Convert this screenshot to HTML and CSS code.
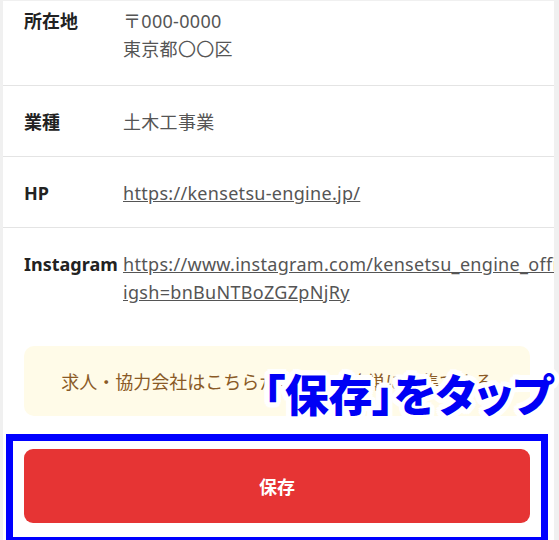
FILE: index.html
```html
<!DOCTYPE html>
<html lang="ja">
<head>
<meta charset="utf-8">
<title>会社情報</title>
<link rel="stylesheet" href="styles.css">
</head>
<body>
<div class="card">
  <div class="row first">
    <div class="label">所在地</div>
    <div class="value">〒000-0000<br>東京都〇〇区</div>
  </div>
  <div class="row">
    <div class="label">業種</div>
    <div class="value">土木工事業</div>
  </div>
  <div class="row">
    <div class="label">HP</div>
    <div class="value"><a class="link" href="#">https://kensetsu-engine.jp/</a></div>
  </div>
  <div class="row last">
    <div class="label">Instagram</div>
    <div class="value"><a class="link" href="#"><span class="nw">https://www.instagram.com/kensetsu_engine_official?</span><wbr><span class="nw">igsh=bnBuNTBoZGZpNjRy</span></a></div>
  </div>
  <div class="notice">求人・協力会社はこちらから無料で簡単に募集できる</div>
  <button class="save" type="button">保存</button>
</div>
<div class="highlight"></div>
<div class="callout">「保存」をタップ</div>
</body>
</html>
```
FILE: styles.css
```css
html, body {
  margin: 0;
  padding: 0;
}
body {
  background: #f0f0f0;
  padding: 1px 5px 0 3px;
  height: 539px;
  overflow: hidden;
  font-family: "Noto Sans", "Noto Sans CJK JP", sans-serif;
  font-size: 18px;
  color: #555;
}
.card {
  background: #fff;
  height: 600px;
  overflow: hidden;
}
.row {
  display: flex;
  padding: 22px 0 20px 21px;
  border-bottom: 1px solid #e4e4e4;
  line-height: 28px;
}
.row.first {
  padding-top: 6px;
  padding-bottom: 22px;
}
.row.last {
  border-bottom: none;
}
.label {
  flex: 0 0 99px;
  font-weight: 700;
  color: #222;
}
.value {
  flex: 1 1 auto;
  min-width: 0;
  color: #555;
  letter-spacing: 0.3px;
}
.link {
  color: #555;
  text-decoration: underline;
}
.nw {
  white-space: nowrap;
}
.notice {
  margin: 20px 24px 0 21px;
  height: 70px;
  border-radius: 10px;
  background: #fffbe8;
  color: #8a5a26;
  display: flex;
  align-items: center;
  justify-content: center;
  font-family: "Noto Sans CJK JP", sans-serif;
}
.save {
  display: block;
  margin: 33px 24px 0 21px;
  width: calc(100% - 45px);
  height: 74px;
  border: none;
  border-radius: 9px;
  background: #e63434;
  color: #fff;
  font-family: "Noto Sans CJK JP", sans-serif;
  font-size: 18px;
  font-weight: 700;
  padding: 0;
}
.highlight {
  position: absolute;
  left: 6px;
  top: 434px;
  width: 542px;
  height: 110px;
  box-sizing: border-box;
  border: 7px solid #0000ff;
}
.callout {
  position: absolute;
  left: 263px;
  top: 371px;
  font-family: "Noto Sans CJK JP", sans-serif;
  font-weight: 900;
  font-size: 44px;
  line-height: 44px;
  font-feature-settings: "palt";
  letter-spacing: -0.3px;
  color: #0000f5;
  white-space: nowrap;
  text-shadow:
    5px 0 0 #fff, -5px 0 0 #fff, 0 5px 0 #fff, 0 -5px 0 #fff,
    3.5px 3.5px 0 #fff, -3.5px 3.5px 0 #fff, 3.5px -3.5px 0 #fff, -3.5px -3.5px 0 #fff,
    4.6px 1.9px 0 #fff, -4.6px 1.9px 0 #fff, 4.6px -1.9px 0 #fff, -4.6px -1.9px 0 #fff,
    1.9px 4.6px 0 #fff, -1.9px 4.6px 0 #fff, 1.9px -4.6px 0 #fff, -1.9px -4.6px 0 #fff;
}
```
